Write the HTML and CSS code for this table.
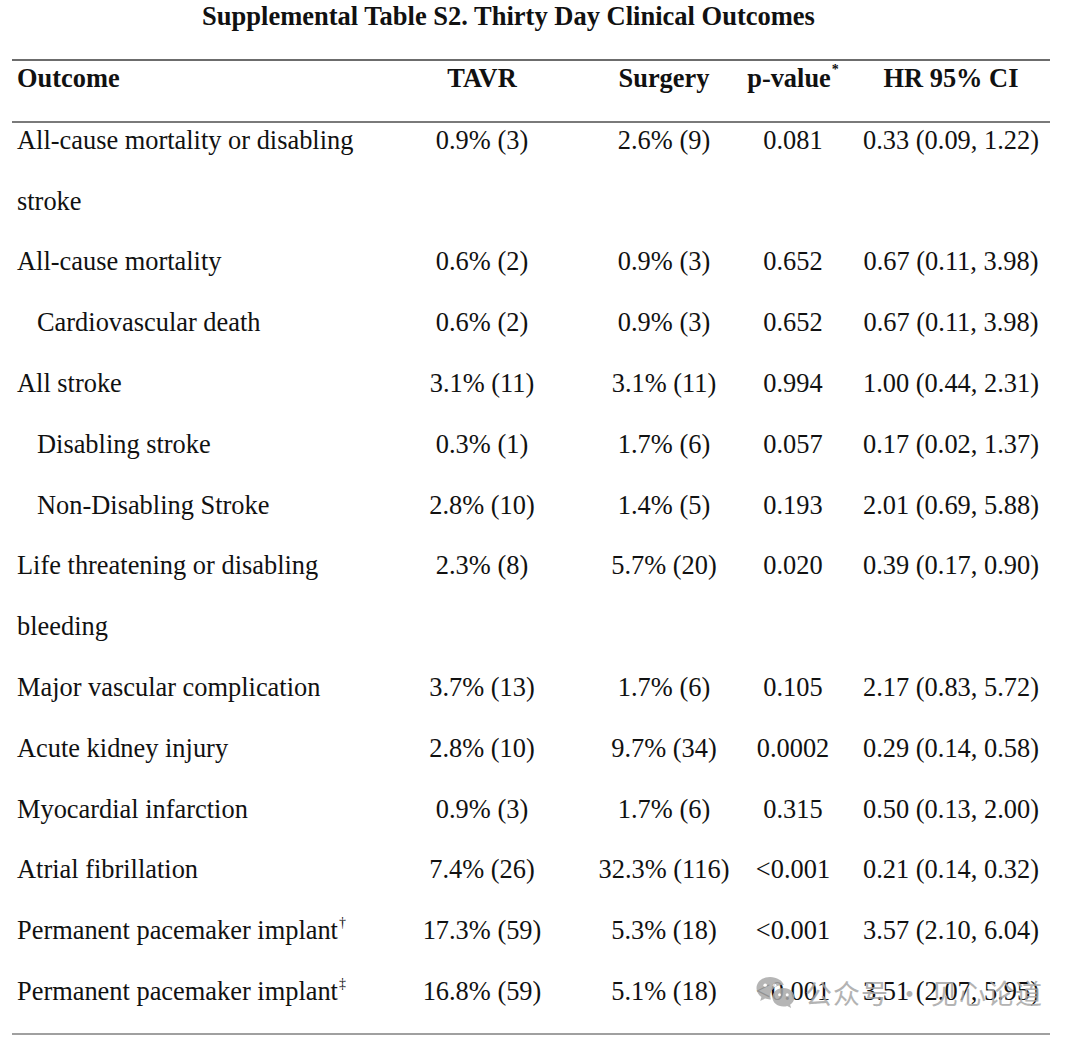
FILE: index.html
```html
<!DOCTYPE html>
<html lang="en">
<head>
<meta charset="utf-8">
<title>Supplemental Table S2</title>
<link rel="stylesheet" href="styles.css">
</head>
<body>
<div class="page">
  <h1 class="title">Supplemental Table S2. Thirty Day Clinical Outcomes</h1>
  <div class="table">
    <div class="head">
      <div class="row">
        <div class="c1">Outcome</div>
        <div class="cn"><span>TAVR</span></div>
        <div class="cn"><span>Surgery</span></div>
        <div class="cn"><span>p-value<sup class="ast">*</sup></span></div>
        <div class="cn c5"><span>HR 95% CI</span></div>
      </div>
    </div>
    <div class="body">
      <div class="rows">
        <div class="row">
          <div class="c1">All-cause mortality or disabling stroke</div>
          <div class="cn">0.9% (3)</div><div class="cn">2.6% (9)</div><div class="cn">0.081</div><div class="cn c5">0.33 (0.09, 1.22)</div>
        </div>
        <div class="row">
          <div class="c1">All-cause mortality</div>
          <div class="cn">0.6% (2)</div><div class="cn">0.9% (3)</div><div class="cn">0.652</div><div class="cn c5">0.67 (0.11, 3.98)</div>
        </div>
        <div class="row">
          <div class="c1 sub">Cardiovascular death</div>
          <div class="cn">0.6% (2)</div><div class="cn">0.9% (3)</div><div class="cn">0.652</div><div class="cn c5">0.67 (0.11, 3.98)</div>
        </div>
        <div class="row">
          <div class="c1">All stroke</div>
          <div class="cn">3.1% (11)</div><div class="cn">3.1% (11)</div><div class="cn">0.994</div><div class="cn c5">1.00 (0.44, 2.31)</div>
        </div>
        <div class="row">
          <div class="c1 sub">Disabling stroke</div>
          <div class="cn">0.3% (1)</div><div class="cn">1.7% (6)</div><div class="cn">0.057</div><div class="cn c5">0.17 (0.02, 1.37)</div>
        </div>
        <div class="row">
          <div class="c1 sub">Non-Disabling Stroke</div>
          <div class="cn">2.8% (10)</div><div class="cn">1.4% (5)</div><div class="cn">0.193</div><div class="cn c5">2.01 (0.69, 5.88)</div>
        </div>
        <div class="row">
          <div class="c1">Life threatening or disabling bleeding</div>
          <div class="cn">2.3% (8)</div><div class="cn">5.7% (20)</div><div class="cn">0.020</div><div class="cn c5">0.39 (0.17, 0.90)</div>
        </div>
        <div class="row">
          <div class="c1">Major vascular complication</div>
          <div class="cn">3.7% (13)</div><div class="cn">1.7% (6)</div><div class="cn">0.105</div><div class="cn c5">2.17 (0.83, 5.72)</div>
        </div>
        <div class="row">
          <div class="c1">Acute kidney injury</div>
          <div class="cn">2.8% (10)</div><div class="cn">9.7% (34)</div><div class="cn">0.0002</div><div class="cn c5">0.29 (0.14, 0.58)</div>
        </div>
        <div class="row">
          <div class="c1">Myocardial infarction</div>
          <div class="cn">0.9% (3)</div><div class="cn">1.7% (6)</div><div class="cn">0.315</div><div class="cn c5">0.50 (0.13, 2.00)</div>
        </div>
        <div class="row">
          <div class="c1">Atrial fibrillation</div>
          <div class="cn">7.4% (26)</div><div class="cn">32.3% (116)</div><div class="cn">&lt;0.001</div><div class="cn c5">0.21 (0.14, 0.32)</div>
        </div>
        <div class="row">
          <div class="c1">Permanent pacemaker implant<sup class="dag">†</sup></div>
          <div class="cn">17.3% (59)</div><div class="cn">5.3% (18)</div><div class="cn">&lt;0.001</div><div class="cn c5">3.57 (2.10, 6.04)</div>
        </div>
        <div class="row">
          <div class="c1">Permanent pacemaker implant<sup class="dag">‡</sup></div>
          <div class="cn">16.8% (59)</div><div class="cn">5.1% (18)</div><div class="cn">&lt;0.001</div><div class="cn c5">3.51 (2.07, 5.95)</div>
        </div>
      </div>
    </div>
  </div>
  <div class="watermark">
    <svg class="wm-icon" viewBox="0 0 40 38" width="40" height="38" aria-hidden="true">
      <path d="M15 3C7.3 3 1.5 8 1.5 14.2c0 3.5 1.9 6.6 4.9 8.7l-1.2 4.2 4.8-2.5c1.6.5 3.3.8 5 .8h.9c-.4-1.1-.6-2.3-.6-3.5 0-6 5.6-10.8 12.6-10.8h.9C27.6 6.7 21.9 3 15 3z" fill="#a9a9a9"/>
      <circle cx="10.2" cy="11.2" r="1.8" fill="#fff"/>
      <circle cx="19.6" cy="11.2" r="1.8" fill="#fff"/>
      <path d="M28.4 14c-6.2 0-11 4.2-11 9.3s4.8 9.3 11 9.3c1.3 0 2.6-.2 3.8-.6l3.9 2.1-1-3.4c2.6-1.7 4.3-4.4 4.3-7.4 0-5.1-4.9-9.3-11-9.3z" fill="#a9a9a9"/>
      <circle cx="24.6" cy="20.8" r="1.5" fill="#fff"/>
      <circle cx="32.2" cy="20.8" r="1.5" fill="#fff"/>
    </svg>
    <span class="wm-text">公众号 · 见心论道</span>
  </div>
</div>
</body>
</html>
```

FILE: styles.css
```css
html, body {
  margin: 0;
  padding: 0;
  background: #ffffff;
}

.page {
  position: relative;
  width: 1080px;
  height: 1042px;
  font-family: "Liberation Serif", "Times New Roman", serif;
  color: #111111;
  font-size: 26.4px;
}

.title {
  margin: 0 0 27px 12px;
  width: 1038px;
  padding-right: 45px;
  box-sizing: border-box;
  font-size: 26.5px;
  font-weight: bold;
  line-height: 32px;
  text-align: center;
}

.table {
  margin-left: 12px;
  width: 1038px;
}

.head {
  border-top: 2px solid #6c6c6c;
  padding-bottom: 12px;
  font-weight: bold;
}

.head .row {
  margin-top: -13px;
}

.body {
  border-top: 2px solid #7a7a7a;
  border-bottom: 2px solid #a0a0a0;
  padding-bottom: 11px;
}

.rows {
  margin-top: -13px;
}

.row {
  display: grid;
  grid-template-columns: 379px 182px 182px 76px 1fr;
  line-height: 60.8px;
}

.c1 {
  padding-left: 5px;
  padding-right: 20px;
}

.c1.sub {
  padding-left: 25px;
}

.cn {
  display: flex;
  justify-content: center;
  white-space: nowrap;
}

.c5 {
  padding-left: 21px;
}

sup {
  line-height: 0;
}

.ast {
  font-size: 14px;
  position: relative;
  top: -3px;
  margin-left: 1px;
}

.dag {
  font-size: 14px;
  position: relative;
  top: -2px;
  margin-left: 1px;
}

.watermark {
  position: absolute;
  left: 755px;
  top: 974px;
  display: flex;
  align-items: center;
  gap: 10px;
  opacity: 0.85;
}

.wm-icon {
  display: block;
}

.wm-text {
  font-family: "Noto Sans CJK SC", "Noto Sans", sans-serif;
  font-size: 27px;
  line-height: 38px;
  color: #a6a6a6;
  letter-spacing: 1px;
}
```
